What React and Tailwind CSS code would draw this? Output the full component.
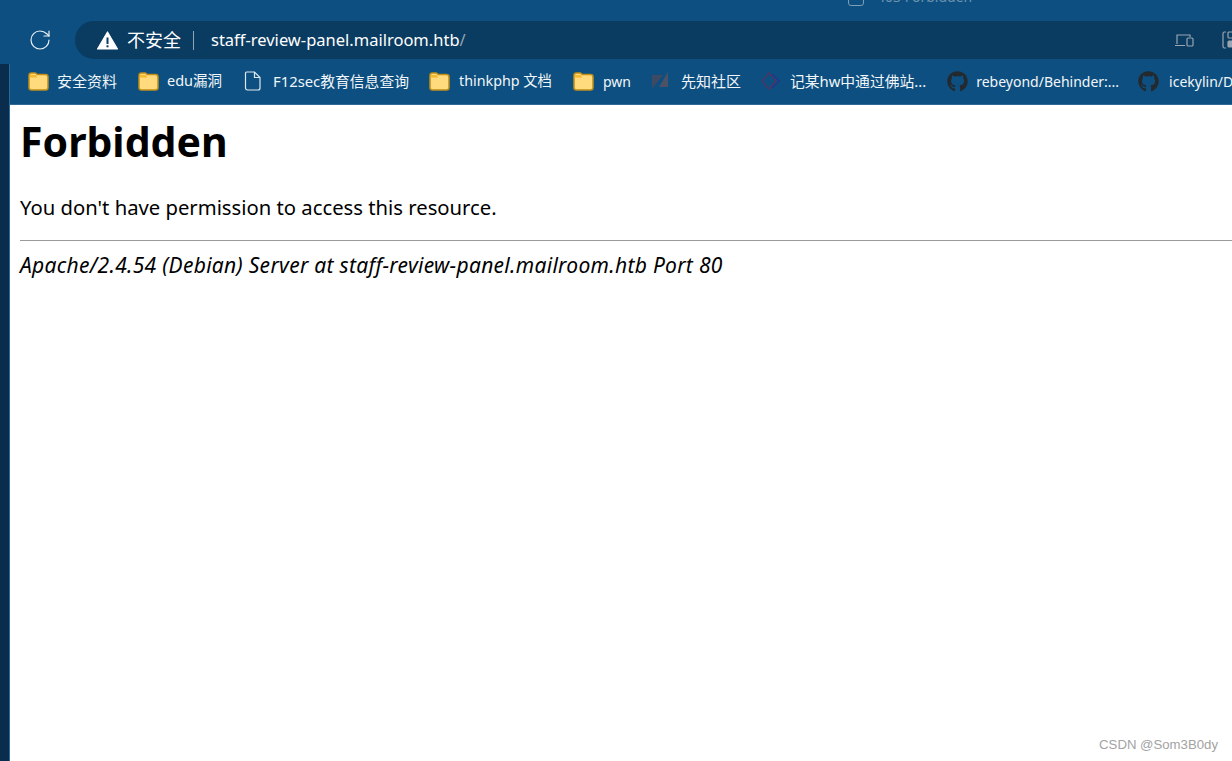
import { RotateCw } from 'lucide-react';
import { FaGithub } from 'react-icons/fa';

function FolderIcon() {
    return (
        <svg width="21" height="19" viewBox="0 0 21 19" className="shrink-0">
            <path d="M1 3.500C1 2 2 1 3.500 1H7c1 0 1.500.5 2 1.500h8.500C19 2.500 20 3.500 20 5v10.500c0 1.500-1 2.500-2.500 2.500h-14C2 18 1 17 1 15.500z" fill="#ffdb7d" stroke="#c08f17" strokeWidth="1.500" />
            <path d="M1.500 5.500h7.500L8 3H2z" fill="#f4b92f" />
        </svg>
    );
}

function FileIcon() {
    return (
        <svg width="18" height="20" viewBox="0 0 18 20" fill="none" stroke="#dfe8f0" strokeWidth="1.200" className="shrink-0">
            <path d="M2.500 1h8l5.500 5.500v10.500c0 1-.8 2-2 2H3.500c-1.200 0-2-1-2-2V2c0-.6.400-1 1-1z" />
            <path d="M10.500 1v5.500H16" />
        </svg>
    );
}

function XianzhiIcon() {
    return (
        <svg width="17" height="18" viewBox="0 0 17 18" className="shrink-0">
            <path d="M0 3h11L0 17z" fill="#3d4a63" />
            <path d="M16 0v15H7z" fill="#4b5266" />
        </svg>
    );
}

function DiamondIcon() {
    return (
        <svg width="20" height="18" viewBox="0 0 20 18" fill="none" strokeWidth="1.100" className="shrink-0">
            <path d="M8 1l7 8-7 8-7-8z" stroke="#6b2a58" />
            <path d="M11 2l7.500 7-7.500 7" stroke="#24358c" />
        </svg>
    );
}

const bookmarks = [
    { icon: <FolderIcon />, label: '安全资料', cls: 'ml-[18px] gap-[8px] text-[15px]' },
    { icon: <FolderIcon />, label: 'edu漏洞', cls: 'ml-[21px] gap-[8px] text-[14.500px]' },
    { icon: <FileIcon />, label: 'F12sec教育信息查询', cls: 'ml-[22px] gap-[11px] text-[14.800px]' },
    { icon: <FolderIcon />, label: 'thinkphp 文档', cls: 'ml-[20px] gap-[9px] text-[14.300px]' },
    { icon: <FolderIcon />, label: 'pwn', cls: 'ml-[21px] gap-[9px] text-[14px]' },
    { icon: <XianzhiIcon />, label: '先知社区', cls: 'ml-[21px] gap-[12px] text-[15px]' },
    { icon: <DiamondIcon />, label: '记某hw中通过佛站...', cls: 'ml-[20px] gap-[9px] text-[14.800px]' },
    { icon: <FaGithub className="w-[21px] h-[21px] shrink-0 text-[#24292e]" />, label: 'rebeyond/Behinder:...', cls: 'ml-[21px] gap-[8px] text-[14px]' },
    { icon: <FaGithub className="w-[21px] h-[21px] shrink-0 text-[#24292e]" />, label: 'icekylin/D', cls: 'ml-[19px] gap-[10px] text-[14px]' },
];

export default function App() {
    return (
        <div className="relative flex flex-col h-[761px] w-[1232px] overflow-hidden bg-[#0c4f80] font-['Noto_Sans','Noto_Sans_CJK_SC',sans-serif]">
            {/* tab strip, cut off by the top of the screenshot */}
            <div className="h-[21px] flex items-start overflow-hidden pl-[848px] gap-[13px]">
                <div className="w-[16px] h-[16px] -mt-[10px] shrink-0 rounded-[3px] border border-[#7f9db5]" />
                <span className="text-[14px] leading-[16px] -mt-[11px] text-[#6f93ae]">403 Forbidden</span>
            </div>

            {/* address bar */}
            <div className="h-[38px] flex items-center">
                <div className="w-[75px] flex justify-center pl-[5px]">
                    <RotateCw className="w-[24px] h-[24px] text-[#e8eef3]" strokeWidth={1.200} />
                </div>
                <div className="flex-1 h-full flex items-center bg-[#0a3b60] rounded-l-full pl-[22px] text-white">
                    <svg width="21" height="19" viewBox="0 0 21 19" className="shrink-0">
                        <path d="M10.500 1L20.500 18H.500z" fill="#fff" stroke="#fff" strokeWidth="1.200" strokeLinejoin="round" />
                        <rect x="9.500" y="6.500" width="2" height="6.500" fill="#0a3b60" />
                        <rect x="9.500" y="14.300" width="2" height="2" fill="#0a3b60" />
                    </svg>
                    <span className="ml-[9px] text-[18px] leading-none">不安全</span>
                    <span className="ml-[12px] w-px h-[19px] bg-[#8fa5b7]" />
                    <span className="ml-[17px] text-[16.500px] whitespace-nowrap">
                        staff-review-panel.mailroom.htb<span className="text-[#8fa5b7]">/</span>
                    </span>
                    <div className="ml-auto flex items-center gap-[28px] -mr-[12px]">
                        <svg width="20" height="15" viewBox="0 0 20 15" fill="none" stroke="#9aa6b1" strokeWidth="1.200" className="shrink-0">
                            <path d="M3 11V2h13v2M1 12.500h10" />
                            <rect x="13" y="5" width="6" height="8" rx="1" />
                        </svg>
                        <svg width="22" height="18" viewBox="0 0 22 18" fill="none" stroke="#9aa6b1" strokeWidth="1.200" className="shrink-0">
                            <path d="M4 1H2.500C1.500 1 1 1.500 1 2.500v13c0 1 .5 1.500 1.500 1.500H4" />
                            <rect x="6" y="1" width="6" height="6" rx="1" />
                            <rect x="6" y="10" width="6" height="6" rx="1" fill="#9aa6b1" />
                            <rect x="15" y="1" width="6" height="6" rx="1" />
                            <rect x="15" y="10" width="6" height="6" rx="1" fill="#9aa6b1" />
                        </svg>
                    </div>
                </div>
            </div>

            <div className="h-[5px]" />

            <div className="flex-1 min-h-0 flex">
                <div className="w-[10px] shrink-0 bg-[#0a2d4d] border-r border-[#2f6a97]" />
                <div className="flex-1 min-w-0 flex flex-col">
                    {/* bookmarks bar */}
                    <div className="h-[41px] flex items-center overflow-hidden border-b border-[#2f6a97] pb-[6px] text-[#f2f6f9] whitespace-nowrap">
                        {bookmarks.map((b) => (
                            <div key={b.label} className={`flex items-center shrink-0 ${b.cls}`}>
                                {b.icon}
                                <span>{b.label}</span>
                            </div>
                        ))}
                    </div>

                    {/* apache error page */}
                    <div className="flex-1 bg-white text-black pl-[10px] pt-[9px]">
                        <h1 className="text-[41px] leading-[54px] font-bold">Forbidden</h1>
                        <p className="mt-[23px] text-[20.250px] leading-[32px]">You don't have permission to access this resource.</p>
                        <hr className="mt-[17px] border-t border-[#9a9a9a]" />
                        <address className="mt-[8px] text-[21px] leading-[32px] italic tracking-[0.300px]">Apache/2.4.54 (Debian) Server at staff-review-panel.mailroom.htb Port 80</address>
                    </div>
                </div>
            </div>

            <span className="absolute right-[14px] bottom-[8px] text-[13.200px] leading-[17px] text-[#a3a3a3] font-['Liberation_Sans',sans-serif]">CSDN @Som3B0dy</span>
        </div>
    );
}
